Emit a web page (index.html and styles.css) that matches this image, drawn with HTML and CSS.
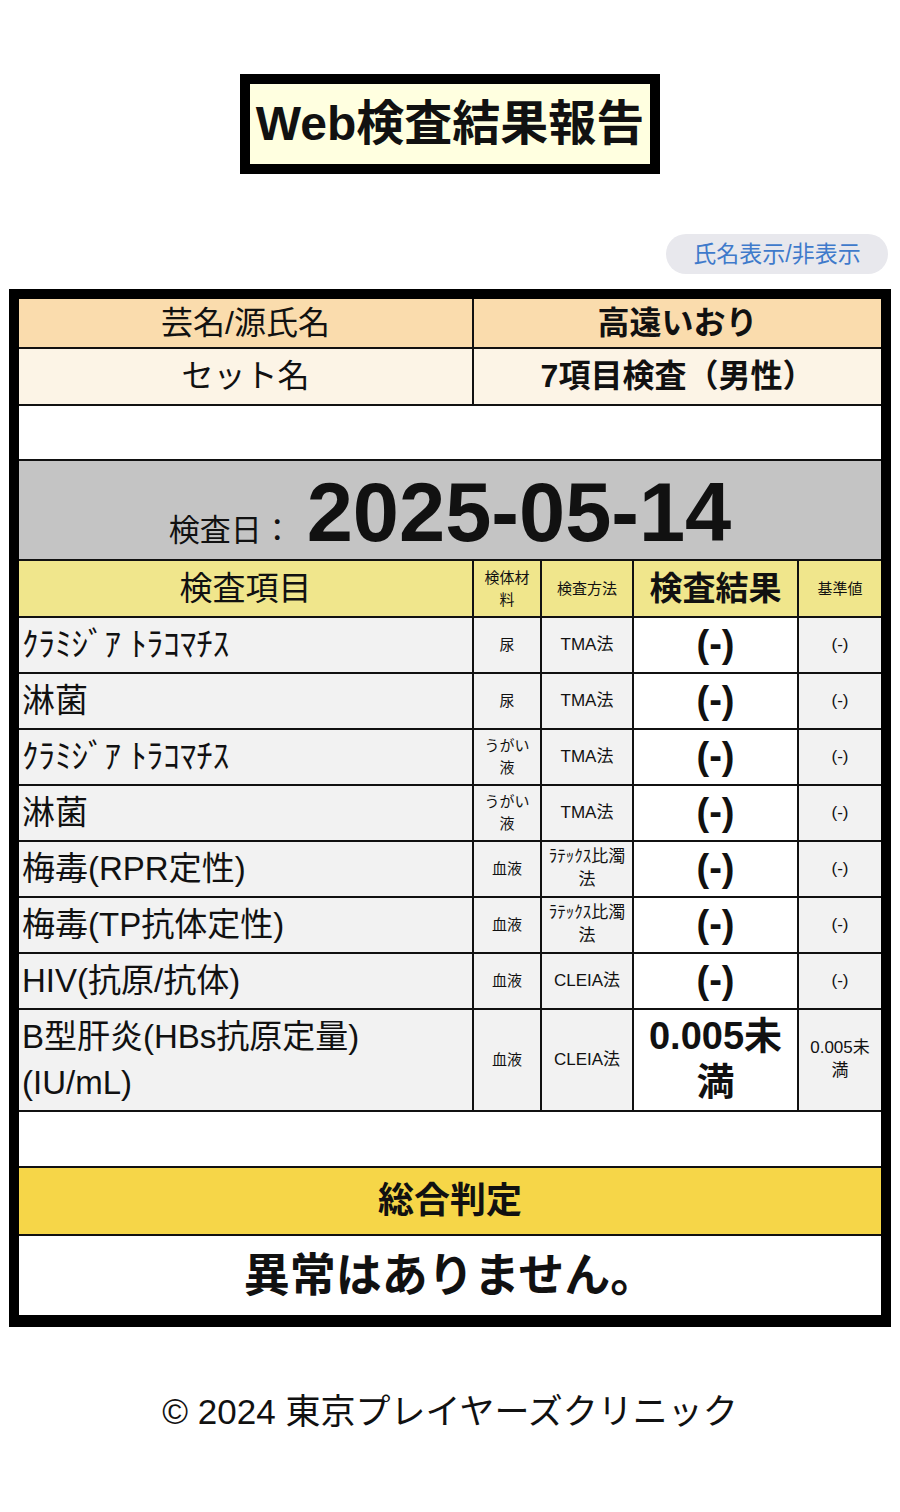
FILE: index.html
```html
<!DOCTYPE html>
<html lang="ja">
<head>
<meta charset="utf-8">
<title>Web検査結果報告</title>
<link rel="stylesheet" href="styles.css">
</head>
<body>
<header class="title-wrap">
  <h1 class="title">Web検査結果報告</h1>
</header>
<div class="toggle-row">
  <button class="toggle" type="button">氏名表示/非表示</button>
</div>
<main class="report">
  <div class="grid">
    <div class="cell peach label">芸名/源氏名</div>
    <div class="cell peach value span4">高遠いおり</div>
    <div class="cell cream label">セット名</div>
    <div class="cell cream value span4">7項目検査（男性）</div>
    <div class="cell blank span5"></div>
    <div class="cell date span5"><span class="date-label">検査日：</span><span class="date-value">2025-05-14</span></div>

    <div class="cell head head-big">検査項目</div>
    <div class="cell head head-small">検体材料</div>
    <div class="cell head head-small">検査方法</div>
    <div class="cell head head-big bold">検査結果</div>
    <div class="cell head head-small">基準値</div>

    <div class="cell item">ｸﾗﾐｼﾞｱ ﾄﾗｺﾏﾁｽ</div>
    <div class="cell spec">尿</div>
    <div class="cell meth">TMA法</div>
    <div class="cell res">(-)</div>
    <div class="cell ref">(-)</div>

    <div class="cell item">淋菌</div>
    <div class="cell spec">尿</div>
    <div class="cell meth">TMA法</div>
    <div class="cell res">(-)</div>
    <div class="cell ref">(-)</div>

    <div class="cell item">ｸﾗﾐｼﾞｱ ﾄﾗｺﾏﾁｽ</div>
    <div class="cell spec">うがい液</div>
    <div class="cell meth">TMA法</div>
    <div class="cell res">(-)</div>
    <div class="cell ref">(-)</div>

    <div class="cell item">淋菌</div>
    <div class="cell spec">うがい液</div>
    <div class="cell meth">TMA法</div>
    <div class="cell res">(-)</div>
    <div class="cell ref">(-)</div>

    <div class="cell item">梅毒(RPR定性)</div>
    <div class="cell spec">血液</div>
    <div class="cell meth">ﾗﾃｯｸｽ比濁法</div>
    <div class="cell res">(-)</div>
    <div class="cell ref">(-)</div>

    <div class="cell item">梅毒(TP抗体定性)</div>
    <div class="cell spec">血液</div>
    <div class="cell meth">ﾗﾃｯｸｽ比濁法</div>
    <div class="cell res">(-)</div>
    <div class="cell ref">(-)</div>

    <div class="cell item">HIV(抗原/抗体)</div>
    <div class="cell spec">血液</div>
    <div class="cell meth">CLEIA法</div>
    <div class="cell res">(-)</div>
    <div class="cell ref">(-)</div>

    <div class="cell item">B型肝炎(HBs抗原定量)<br>(IU/mL)</div>
    <div class="cell spec">血液</div>
    <div class="cell meth">CLEIA法</div>
    <div class="cell res">0.005未満</div>
    <div class="cell ref">0.005未満</div>

    <div class="cell blank span5"></div>
    <div class="cell total span5">総合判定</div>
    <div class="cell verdict span5">異常はありません。</div>
  </div>
</main>
<footer class="footer">© 2024 東京プレイヤーズクリニック</footer>
</body>
</html>
```

FILE: styles.css
```css
* { box-sizing: border-box; }

body {
  margin: 0;
  background: #ffffff;
  color: #111111;
  font-family: "Liberation Sans", "Noto Sans CJK JP", sans-serif;
}

.title-wrap {
  display: flex;
  justify-content: center;
  padding-top: 74px;
}

.title {
  margin: 0;
  width: 420px;
  height: 100px;
  border: 10px solid #000000;
  background: #ffffe0;
  display: flex;
  align-items: center;
  justify-content: center;
  font-size: 48px;
  font-weight: 700;
  line-height: 1;
}

.toggle-row {
  display: flex;
  justify-content: flex-end;
  padding: 60px 12px 0 0;
}

.toggle {
  width: 222px;
  height: 40px;
  border: none;
  border-radius: 20px;
  background: #e8e8ed;
  color: #3f7acb;
  font-family: "Liberation Sans", "Noto Sans CJK JP", sans-serif;
  font-size: 23px;
  line-height: 1;
  padding: 0;
}

.report {
  margin: 15px 9px 0 9px;
  border: 10px solid #000000;
  border-bottom-width: 12px;
  background: #000000;
}

.grid {
  display: grid;
  grid-template-columns: 453px 66px 90px 163px 82px;
  grid-template-rows: 48px 55px 53px 98px 55px repeat(7, 54px) 100px 54px 66px 79px;
  gap: 2px;
  background: #111111;
}

.cell {
  display: flex;
  align-items: center;
  justify-content: center;
  text-align: center;
  background: #f2f2f2;
  line-height: 1.2;
}

.span4 { grid-column: span 4; }
.span5 { grid-column: span 5; }

.peach { background: #fadcad; }
.cream { background: #fcf4e6; }

.label { font-size: 32px; }
.value { font-size: 32px; font-weight: 700; }

.blank { background: #ffffff; }

.date {
  background: #c4c4c4;
  align-items: baseline;
  padding-top: 10px;
  gap: 14px;
}

.date-label { font-size: 31px; }

.date-value {
  font-size: 83px;
  font-weight: 700;
  line-height: 1;
}

.head { background: #f0e68c; }
.head-big { font-size: 33px; }
.head-small { font-size: 15px; padding: 0 4px; line-height: 1.45; }
.bold { font-weight: 700; }

.item {
  justify-content: flex-start;
  text-align: left;
  font-size: 33px;
  padding: 0 3px;
  line-height: 1.4;
}

.spec {
  font-size: 15px;
  padding: 0 4px;
  line-height: 1.45;
}

.meth {
  font-size: 17px;
  padding: 0 4px;
  line-height: 1.35;
}

.res {
  background: #ffffff;
  font-size: 38px;
  font-weight: 700;
  padding: 0 4px;
  line-height: 1.2;
}

.ref {
  font-size: 17px;
  padding: 0 4px;
  line-height: 1.35;
}

.total {
  background: #f6d648;
  font-size: 36px;
  font-weight: 700;
}

.verdict {
  background: #ffffff;
  font-size: 46px;
  font-weight: 700;
}

.footer {
  margin-top: 64px;
  text-align: center;
  font-size: 35px;
  line-height: 1.2;
}
```
